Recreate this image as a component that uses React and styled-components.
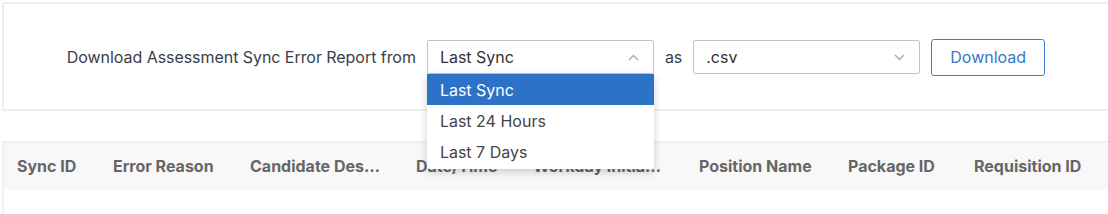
import styled, { createGlobalStyle } from "styled-components";

const GlobalStyle = createGlobalStyle`
  body {
    margin: 0;
    background: #fff;
    font-family: Inter, "Noto Sans", sans-serif;
    overflow: hidden;
  }
`;

const Page = styled.div`
  padding: 2px 0 0 2px;
  width: 1110px;
`;

const Panel = styled.section`
  box-sizing: border-box;
  width: 1108px;
  height: 109px;
  border: 2px solid #eeeeee;
  display: flex;
  align-items: center;
  justify-content: center;
  gap: 11px;
  padding-top: 1px;
`;

const Label = styled.span`
  font-size: 16px;
  letter-spacing: -0.05px;
  color: #3a3d48;
`;

const SelectWrap = styled.div`
  position: relative;
`;

const SelectBox = styled.div`
  box-sizing: border-box;
  width: 227px;
  height: 34px;
  border: 1px solid #c4c4c4;
  border-radius: 2px;
  display: flex;
  align-items: center;
  justify-content: space-between;
  padding: 0 14px 0 12px;
  font-size: 16px;
  color: #333;
  background: #fff;
`;

const Chevron = styled.svg`
  width: 11px;
  height: 7px;
  fill: none;
  stroke: #a8a8a8;
  stroke-width: 1.3;
`;

const Menu = styled.ul`
  position: absolute;
  top: 100%;
  left: 0;
  width: 227px;
  margin: 0;
  padding: 0 0 2px;
  list-style: none;
  background: #fff;
  box-shadow: 0 3px 8px rgba(0, 0, 0, 0.18);
  border-radius: 0 0 3px 3px;
  z-index: 5;
`;

const Option = styled.li`
  height: 31px;
  display: flex;
  align-items: center;
  padding-left: 13px;
  font-size: 16px;
  color: ${(p) => (p.active ? "#fff" : "#444")};
  background: ${(p) => (p.active ? "#2b72c8" : "transparent")};
`;

const Button = styled.button`
  box-sizing: border-box;
  width: 114px;
  height: 37px;
  border: 1px solid #3e7ed3;
  border-radius: 3px;
  background: #fff;
  color: #3a76c6;
  font-family: inherit;
  font-size: 16px;
`;

const Table = styled.div`
  margin-top: 30px;
  width: 1108px;
  height: 80px;
  border-top: 2px solid #efefef;
  border-left: 2px solid #efefef;
`;

const HeaderRow = styled.div`
  display: grid;
  grid-template-columns: 96px 137px 166px 117px 166px 149px 126px 150px;
  height: 46px;
  align-items: center;
  background: #f8f8f8;
  padding-left: 13px;
  padding-bottom: 1px;
`;

const HeaderCell = styled.div`
  font-size: 16px;
  font-weight: 700;
  color: #666;
  white-space: nowrap;
  overflow: hidden;
  text-overflow: ellipsis;
  max-width: ${(p) => p.max || "none"};
`;

const ChevronUp = () => (
  <Chevron viewBox="0 0 11 7">
    <path d="M1 6 L5.5 1.5 L10 6" />
  </Chevron>
);

const ChevronDown = () => (
  <Chevron viewBox="0 0 11 7">
    <path d="M1 1 L5.5 5.5 L10 1" />
  </Chevron>
);

const columns = [
  { label: "Sync ID" },
  { label: "Error Reason" },
  { label: "Candidate Description", max: "133px" },
  { label: "Date/Time" },
  { label: "Workday Initiator", max: "133px" },
  { label: "Position Name" },
  { label: "Package ID" },
  { label: "Requisition ID" },
];

export default function App() {
  return (
    <Page>
      <GlobalStyle />
      <Panel>
        <Label>Download Assessment Sync Error Report from</Label>
        <SelectWrap>
          <SelectBox>
            Last Sync
            <ChevronUp />
          </SelectBox>
          <Menu>
            <Option active>Last Sync</Option>
            <Option>Last 24 Hours</Option>
            <Option>Last 7 Days</Option>
          </Menu>
        </SelectWrap>
        <Label>as</Label>
        <SelectWrap>
          <SelectBox>
            .csv
            <ChevronDown />
          </SelectBox>
        </SelectWrap>
        <Button>Download</Button>
      </Panel>
      <Table>
        <HeaderRow>
          {columns.map((c) => (
            <HeaderCell key={c.label} max={c.max}>
              {c.label}
            </HeaderCell>
          ))}
        </HeaderRow>
      </Table>
    </Page>
  );
}
